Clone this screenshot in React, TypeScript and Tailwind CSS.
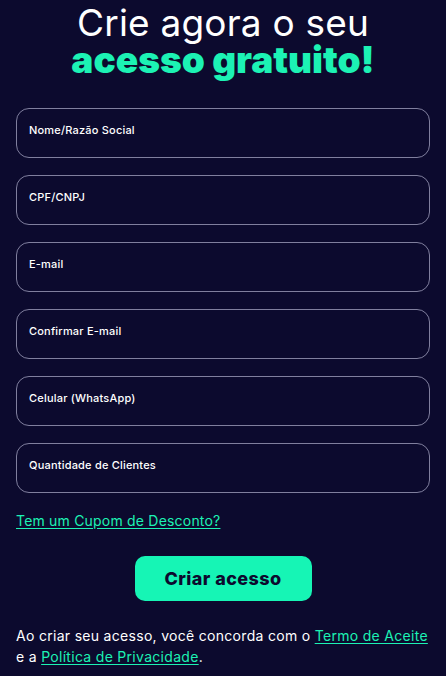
const fields = [
  "Nome/Razão Social",
  "CPF/CNPJ",
  "E-mail",
  "Confirmar E-mail",
  "Celular (WhatsApp)",
  "Quantidade de Clientes",
];

export default function App() {
  return (
    <div
      className="min-h-[676px] w-full bg-[#0c0a2e] px-4 text-white"
      style={{ fontFamily: "Inter, 'Noto Sans', sans-serif" }}
    >
      <h1 className="pt-[4px] text-center">
        <span className="block text-[37px] font-normal leading-[38px] tracking-[0.2px]">Crie agora o seu</span>
        <span className="block text-[37px] font-black leading-[36px] tracking-[0px] text-[#1cf2b4]">
          acesso gratuito!
        </span>
      </h1>

      <form className="mt-[30px] flex flex-col gap-[17px]">
        {fields.map((label) => (
          <label
            key={label}
            className="flex h-[50px] w-full flex-col rounded-[13px] border border-[#807f9e] px-[12px] pt-[14px]"
          >
            <span className="text-[11px] font-medium leading-[14px] tracking-[0.2px] text-white">{label}</span>
            <input className="w-full bg-transparent text-[13px] outline-none" />
          </label>
        ))}
      </form>

      <a href="#" className="mt-[19px] block text-[14px] leading-[18px] tracking-[0.2px] text-[#1cf2b4] underline underline-offset-2">
        Tem um Cupom de Desconto?
      </a>

      <div className="mt-[26px] flex justify-center">
        <button className="h-[45px] w-[177px] rounded-[10px] bg-[#16f5b5] text-[18px] font-extrabold tracking-[0.4px] text-[#0c0a2e]">
          Criar acesso
        </button>
      </div>

      <p className="mt-[24px] text-[14px] leading-[21px] tracking-[0.3px] text-white">
        Ao criar seu acesso, você concorda com o{" "}
        <a href="#" className="text-[#1cf2b4] underline underline-offset-2">Termo de Aceite</a> e a{" "}
        <a href="#" className="text-[#1cf2b4] underline underline-offset-2">Política de Privacidade</a>.
      </p>
    </div>
  );
}
